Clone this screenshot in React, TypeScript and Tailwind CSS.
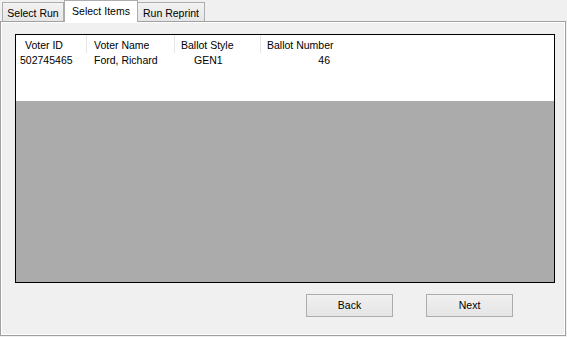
export default function App() {
  const font = "font-['Liberation_Sans',Arial,sans-serif] text-[10.5px] leading-[13px] text-black";
  const tabClass =
    "h-[19px] border-t border-[#adadad] bg-gradient-to-b from-[#f2f2f2] to-[#e6e6e6] pt-[4px] text-center";
  const btnClass =
    "h-[23px] w-[87px] border border-[#adadad] bg-gradient-to-b from-[#f0f0f0] to-[#e5e5e5] text-center";

  return (
    <div className={`flex h-[337px] w-[567px] flex-col bg-[#f0f0f0] ${font}`}>
      {/* tab strip */}
      <div className="relative z-10 flex h-[21px] items-end pl-[2px]">
        <div className={`${tabClass} w-[62px] border-l border-r`}>Select Run</div>
        <div className="-mb-px h-[22px] w-[74px] border-l border-r border-t border-[#adadad] bg-white pt-[4px] text-center">
          Select Items
        </div>
        <div className={`${tabClass} w-[67px] border-r`}>Run Reprint</div>
      </div>

      {/* tab page */}
      <div className="h-[315px] w-[566px] border border-[#a0a0a0] bg-[#f0f0f0] shadow-[inset_1px_1px_0_#ffffff,inset_-1px_-1px_0_#ffffff]">
        <div className="ml-[14px] mt-[12px] flex h-[249px] w-[540px] flex-col border border-black bg-[#ababab]">
          <div className="h-[66px] bg-white">
            <div className="flex h-[19px] items-start">
              <div className="h-[18px] w-[71px] border-r border-[#e5e5e5] pl-[9px] pt-[4px]">Voter ID</div>
              <div className="h-[18px] w-[88px] border-r border-[#e5e5e5] pl-[7px] pt-[4px]">Voter Name</div>
              <div className="h-[18px] w-[86px] border-r border-[#e5e5e5] pl-[6px] pt-[4px]">Ballot Style</div>
              <div className="h-[18px] w-[86px] pl-[6px] pt-[4px]">Ballot Number</div>
            </div>
            <div className="flex h-[14px]">
              <div className="w-[71px] pl-[4px]">502745465</div>
              <div className="w-[88px] pl-[7px]">Ford, Richard</div>
              <div className="w-[86px] pl-[19px]">GEN1</div>
              <div className="w-[69px] text-right">46</div>
            </div>
          </div>
        </div>

        <div className="ml-[305px] mt-[11px] flex gap-[33px]">
          <button className={btnClass}>Back</button>
          <button className={btnClass}>Next</button>
        </div>
      </div>
    </div>
  );
}
